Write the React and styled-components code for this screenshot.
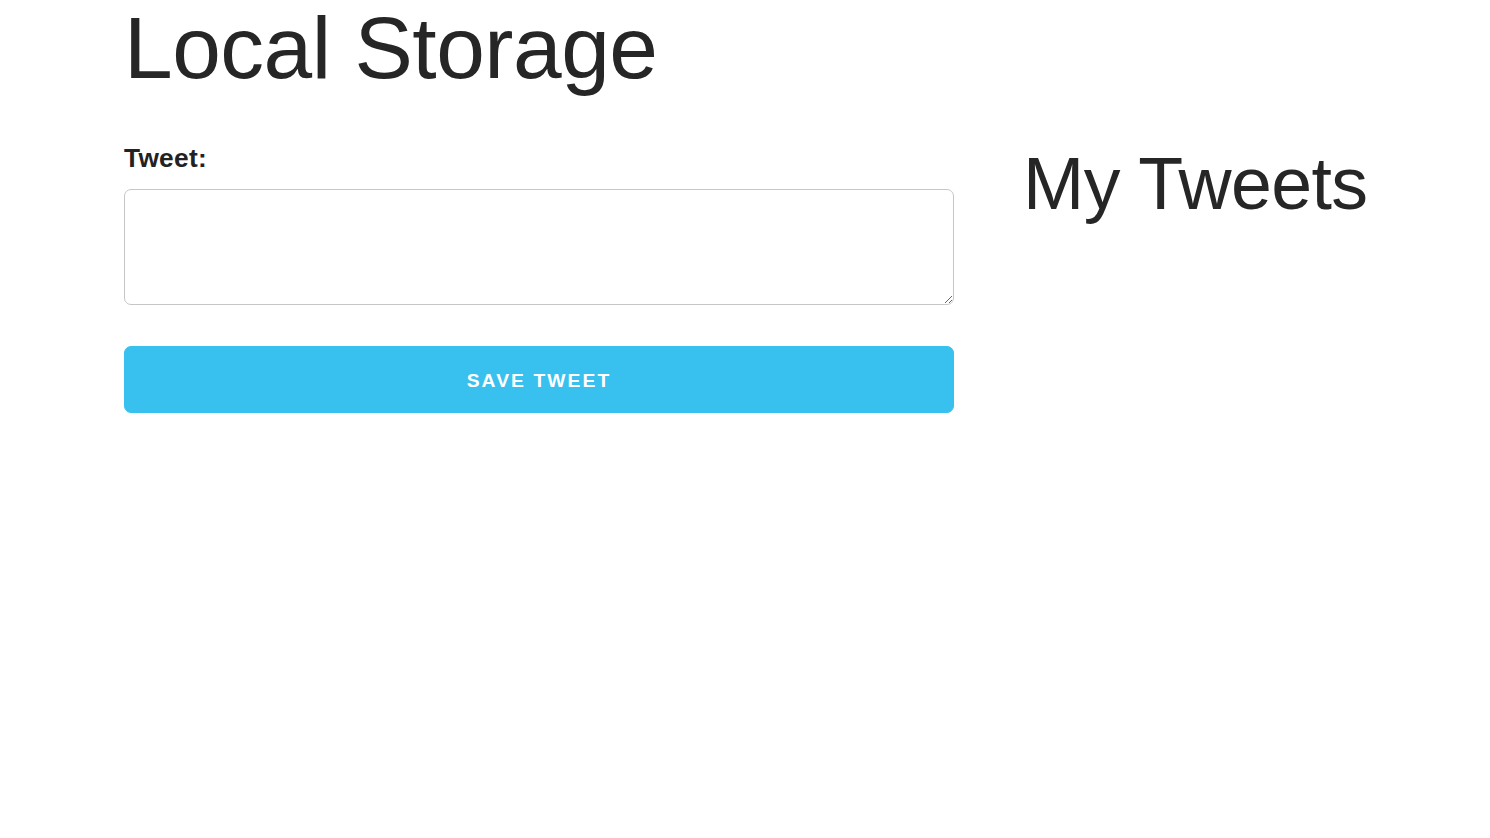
// Dependencies
import styled, { createGlobalStyle } from 'styled-components'
import { useState } from 'react'

const GlobalStyle = createGlobalStyle`
  html, body {
    margin: 0;
    padding: 0;
    background: #fff;
  }
  body {
    font-family: "Liberation Sans", Arial, sans-serif;
    color: #222;
  }
`

const Page = styled.div`
  padding: 0 60px 0 124px;
`

const Title = styled.h1`
  margin: -4px 0 35px;
  font-size: 87.5px;
  line-height: 1.2;
  font-weight: 400;
  letter-spacing: -0.5px;
  color: #262626;
`

const Row = styled.div`
  display: grid;
  grid-template-columns: 830px 1fr;
  column-gap: 69px;
  align-items: start;
`

const Form = styled.form`
  display: flex;
  flex-direction: column;
`

const Label = styled.label`
  display: block;
  font-size: 26.25px;
  line-height: 1.6;
  font-weight: 700;
  letter-spacing: 0.3px;
  margin: 1px 0 10px;
`

const TextArea = styled.textarea`
  display: block;
  box-sizing: border-box;
  width: 100%;
  height: 116px;
  padding: 10px 17px;
  border: 1px solid #c6c6c6;
  border-radius: 7px;
  background: #fff;
  font: inherit;
  font-size: 26px;
  outline: none;
`

const Button = styled.button`
  margin-top: 41px;
  height: 67px;
  padding: 3px 0 0;
  border: 1px solid #38c1ef;
  border-radius: 7px;
  background: #38c1ef;
  color: #fff;
  font-family: "Liberation Sans", Arial, sans-serif;
  font-size: 19.25px;
  font-weight: 700;
  letter-spacing: 2.1px;
  text-transform: uppercase;
  cursor: pointer;
`

const SubTitle = styled.h2`
  margin: 2px 0 0;
  font-size: 73.5px;
  line-height: 1.25;
  font-weight: 400;
  letter-spacing: -0.6px;
  white-space: nowrap;
  color: #262626;
`

// Component
const App = () => {
  const [tweet, setTweet] = useState('')

  return (
    <>
      <GlobalStyle />
      <Page>
        <Title>Local Storage</Title>
        <Row>
          <Form onSubmit={e => e.preventDefault()}>
            <Label htmlFor="tweet">Tweet:</Label>
            <TextArea id="tweet" value={tweet} onChange={e => setTweet(e.target.value)} />
            <Button type="submit">Save Tweet</Button>
          </Form>
          <div>
            <SubTitle>My Tweets</SubTitle>
          </div>
        </Row>
      </Page>
    </>
  )
}

export default App
